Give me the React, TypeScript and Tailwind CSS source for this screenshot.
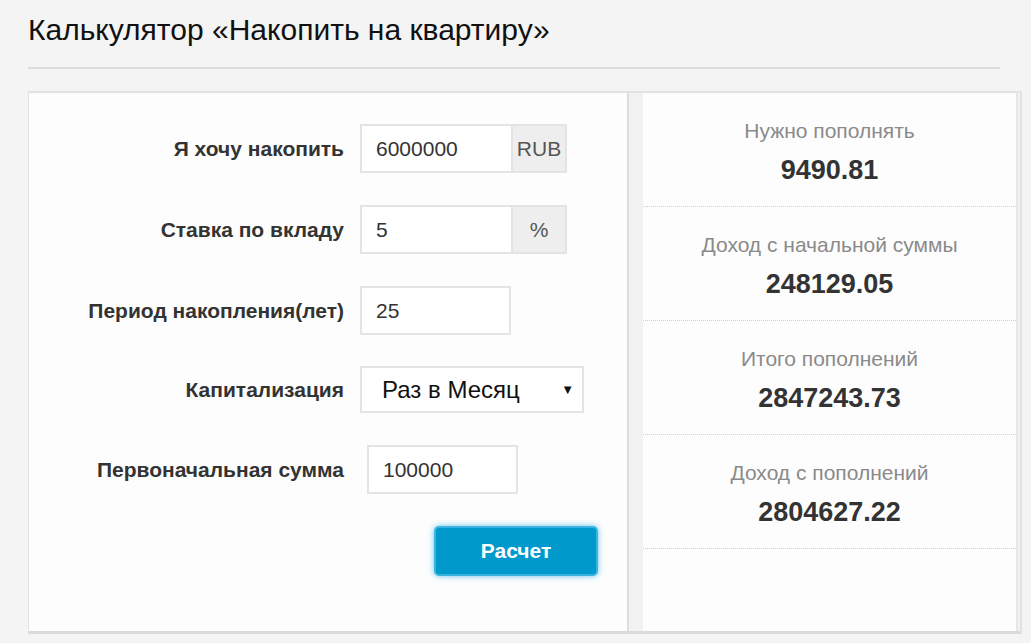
import React from "react";

const results = [
  { label: "Нужно пополнять", value: "9490.81" },
  { label: "Доход с начальной суммы", value: "248129.05" },
  { label: "Итого пополнений", value: "2847243.73" },
  { label: "Доход с пополнений", value: "2804627.22" },
];

function Label({ children }: { children: React.ReactNode }) {
  return (
    <div className="w-[315px] shrink-0 text-right text-[21px] font-bold text-[#333]">
      {children}
    </div>
  );
}

export default function App() {
  return (
    <div
      className="w-full h-[643px] overflow-hidden bg-[#f4f4f4] px-[28px]"
      style={{ fontFamily: '"Liberation Sans", Arial, sans-serif' }}
    >
      <h1 className="pt-[12px] text-[30px] leading-[36px] text-[#111] font-normal">
        Калькулятор «Накопить на квартиру»
      </h1>
      <div className="mt-[19px] mr-[3px] h-[2px] bg-[#dcdcdc]" />

      <div className="mt-[22px] flex h-[543px] w-[994px] border-[2px] border-l-[1px] border-[#e2e2e2] border-b-[3px] border-b-[#dadada]">
        {/* form */}
        <div className="w-[600px] shrink-0 bg-[#fdfdfd] border-r-[2px] border-[#dedede] pt-[31px]">
          <div className="flex items-center gap-[16px] h-[49px]">
            <Label>Я хочу накопить</Label>
            <div className="flex h-[49px] border-[2px] border-[#e4e4e4]">
              <div className="w-[149px] bg-white pl-[14px] flex items-center text-[21px] text-[#333]">
                6000000
              </div>
              <div className="w-[54px] bg-[#eeeeee] border-l-[2px] border-[#e4e4e4] flex items-center justify-center text-[21px] text-[#555]">
                RUB
              </div>
            </div>
          </div>

          <div className="mt-[32px] flex items-center gap-[16px] h-[49px]">
            <Label>Ставка по вкладу</Label>
            <div className="flex h-[49px] border-[2px] border-[#e4e4e4]">
              <div className="w-[149px] bg-white pl-[14px] flex items-center text-[21px] text-[#333]">
                5
              </div>
              <div className="w-[54px] bg-[#eeeeee] border-l-[2px] border-[#e4e4e4] flex items-center justify-center text-[21px] text-[#555]">
                %
              </div>
            </div>
          </div>

          <div className="mt-[32px] flex items-center gap-[16px] h-[49px]">
            <Label>Период накопления(лет)</Label>
            <div className="w-[151px] h-[49px] bg-white border-[2px] border-[#e4e4e4] pl-[14px] flex items-center text-[21px] text-[#333]">
              25
            </div>
          </div>

          <div className="mt-[31px] flex items-center gap-[16px] h-[47px]">
            <Label>Капитализация</Label>
            <div className="w-[224px] h-[47px] bg-white border-[2px] border-[#e4e4e4] pl-[20px] pr-[8px] flex items-center justify-between text-[24px] text-[#111]">
              <span>Раз в Месяц</span>
              <span className="text-[13px] text-[#111]">▼</span>
            </div>
          </div>

          <div className="mt-[32px] flex items-center gap-[23px] h-[49px]">
            <Label>Первоначальная сумма</Label>
            <div className="w-[151px] h-[49px] bg-white border-[2px] border-[#e4e4e4] pl-[14px] flex items-center text-[21px] text-[#333]">
              100000
            </div>
          </div>

          <div className="mt-[32px] pl-[405px]">
            <button className="w-[164px] h-[50px] rounded-[5px] bg-[#0099cc] border-[2px] border-[#38b4e0] text-white text-[21px] font-bold shadow-[0_0_6px_rgba(0,160,230,0.6)]">
              Расчет
            </button>
          </div>
        </div>

        {/* results */}
        <div className="flex-1 flex bg-[#f2f2f2]">
          <div className="ml-[14px] mr-[2px] flex-1 bg-[#fdfdfd] border-r-[2px] border-[#e6e6e6]">
            {results.map((r) => (
              <div
                key={r.label}
                className="h-[114px] border-b border-dotted border-[#cfcfcf] pt-[26px] text-center"
              >
                <div className="text-[21px] leading-[24px] text-[#8a8a8a]">{r.label}</div>
                <div className="mt-[12px] text-[27px] leading-[30px] font-bold text-[#333]">
                  {r.value}
                </div>
              </div>
            ))}
          </div>
        </div>
      </div>
    </div>
  );
}
